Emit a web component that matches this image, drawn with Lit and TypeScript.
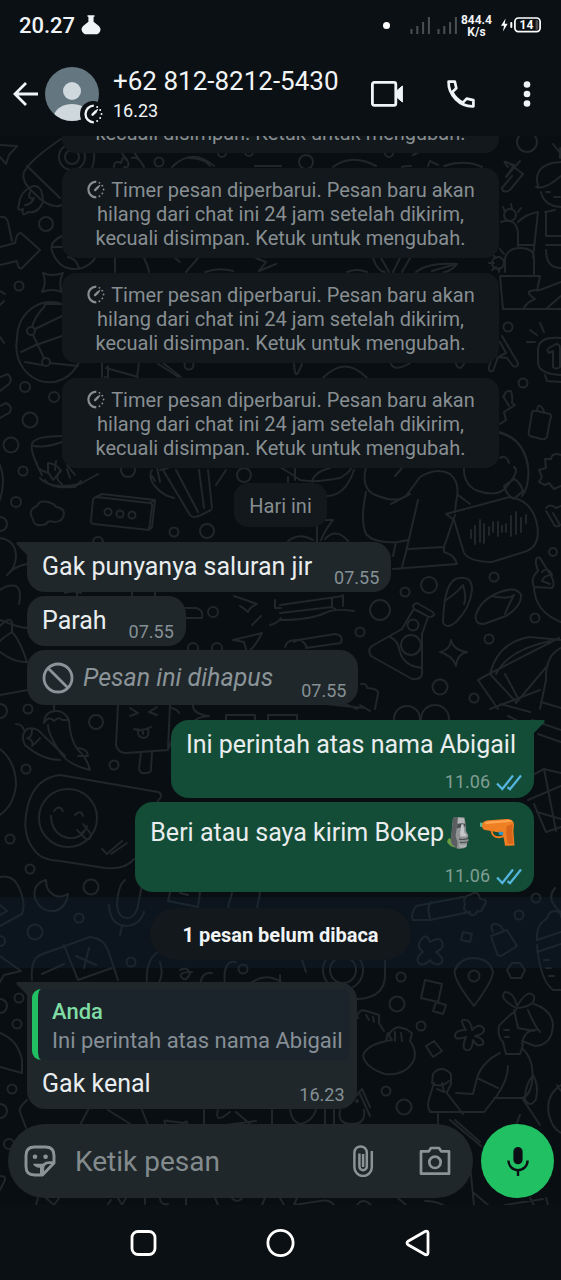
import { LitElement, html, css, svg, nothing } from "lit";
import { customElement, property } from "lit/decorators.js";

type Bubble = {
  side: "in" | "out";
  tail?: boolean;
  text: string;
  time: string;
  deleted?: boolean;
  emojis?: boolean;
  quote?: { author: string; text: string };
};

const TIMER_NOTE =
  "Timer pesan diperbarui. Pesan baru akan hilang dari chat ini 24 jam setelah dikirim, kecuali disimpan. Ketuk untuk mengubah.";
const TIMER_NOTE_END = "kecuali disimpan. Ketuk untuk mengubah.";

const BUBBLES_BEFORE: Bubble[][] = [
  [
    { side: "in", tail: true, text: "Gak punyanya saluran jir", time: "07.55" },
    { side: "in", text: "Parah", time: "07.55" },
    { side: "in", text: "Pesan ini dihapus", time: "07.55", deleted: true },
  ],
  [
    { side: "out", tail: true, text: "Ini perintah atas nama Abigail", time: "11.06" },
    { side: "out", text: "Beri atau saya kirim Bokep", time: "11.06", emojis: true },
  ],
];

const LAST: Bubble = {
  side: "in",
  tail: true,
  text: "Gak kenal",
  time: "16.23",
  quote: { author: "Anda", text: "Ini perintah atas nama Abigail" },
};

/* ---------- icons ---------- */

const timerIcon = html`<svg viewBox="0 0 24 24" fill="none" stroke="currentColor" stroke-linecap="round">
  <path d="M13 2A10 10 0 1 0 13 22" stroke-width="2.8" stroke-linecap="butt" />
  <path d="M11.500 12.700 15.300 9" stroke-width="3" /><path d="M14 10.300 17.300 6.900" stroke-width="1.600" />
  <path d="M17 3.600v.01M20.600 7.100v.01M22.200 12v.01M20.600 16.900v.01M17 20.500v.01" stroke-width="2.400" />
</svg>`;

const backIcon = html`<svg width="28" height="28" viewBox="0 0 28 28" fill="none" stroke="currentColor" stroke-width="2.8">
  <path d="M26 14H3.5M14 3 3 14l11 11" />
</svg>`;

const videoIcon = html`<svg width="34" height="28" viewBox="0 0 34 28">
  <rect x="2.4" y="2.4" width="23.4" height="23" rx="1.8" fill="none" stroke="currentColor" stroke-width="2.8" />
  <path d="M26 11.400 32.400 6v16L26 16.600z" fill="currentColor" stroke="currentColor" stroke-width="1" />
</svg>`;

const callIcon = html`<svg width="30" height="30" viewBox="0 0 30 30" fill="none" stroke="currentColor" stroke-width="2.7" stroke-linejoin="round">
  <path d="M2.600 2.600h6.200l1.500 6.700-4 3.800C8.600 17.800 12 21.200 16.800 23.600l3.900-4 6.700 1.500v6.200C14 27.900 2.100 16 2.600 2.600z" />
</svg>`;

const moreIcon = html`<svg width="8" height="28" viewBox="0 0 8 28" fill="currentColor">
  <circle cx="4" cy="4.500" r="3.300" /><circle cx="4" cy="14" r="3.300" /><circle cx="4" cy="23.500" r="3.300" />
</svg>`;

const flaskIcon = html`<svg width="20" height="20" viewBox="0 0 20 20" fill="currentColor">
  <path d="M6.500.3h7v1.400h-.9v5.100c1.600 1.500 5.300 3.500 6.600 6.200.9 2.100-.4 5-3.200 6.300H4C1.200 18 0 15.100.8 13c1.300-2.700 5-4.700 6.600-6.200V1.700h-.9z" />
</svg>`;

const signalIcon = html`<svg width="21" height="17" viewBox="0 0 21 17" fill="currentColor">
  <rect x="0.500" y="12" width="2" height="5" /><rect x="6.300" y="9" width="2" height="8" />
  <rect x="12.100" y="5" width="2" height="12" /><rect x="17.900" y="0" width="2" height="17" />
</svg>`;

const batteryIcon = html`<svg width="42" height="16" viewBox="0 0 42 16">
  <path d="M5.600 1.500 1 8.800h3L3 14.500l4.700-7.800H4.700z" fill="#fff" />
  <rect x="10.300" y="5" width="2" height="6" rx="1" fill="#fff" />
  <rect x="14.900" y="1" width="25.200" height="13.600" rx="3.500" fill="none" stroke="#fff" stroke-width="1.700" />
  <rect x="35.600" y="3" width="2.600" height="9.700" rx="1" fill="#4a4e51" />
  <text x="26.500" y="12.200" text-anchor="middle" font-family="Roboto, sans-serif" font-weight="700" font-size="12" fill="#fff">14</text>
</svg>`;

const avatarArt = html`<svg width="54" height="54" viewBox="0 0 54 54">
  <clipPath id="disc"><circle cx="27" cy="27" r="27" /></clipPath>
  <g clip-path="url(#disc)">
    <rect width="54" height="54" fill="#64767f" />
    <circle cx="27" cy="24" r="9" fill="#cfd8dd" />
    <path d="M9 54v-6c2.500-7.500 10-11 18-11s15.500 3.500 18 11v6z" fill="#cfd8dd" />
  </g>
</svg>`;

const blockedIcon = html`<svg width="32" height="32" viewBox="0 0 32 32" fill="none" stroke="currentColor" stroke-width="2.800">
  <circle cx="16" cy="16" r="14" /><path d="M6.200 6.200 25.800 25.800" />
</svg>`;

const ticksIcon = html`<svg width="26" height="17" viewBox="0 0 26 17" fill="none" stroke="#53b4dd" stroke-width="2.300">
  <path d="M1 9.500 6.300 15 17 1.500M11.500 13.200 14 15.200 25 1.500" />
</svg>`;

const stickerIcon = html`<svg width="32" height="32" viewBox="0 0 32 32" fill="none" stroke="currentColor">
  <path d="M10.500 2h11Q30 2 30 10.500V18L18.500 30h-8Q2 30 2 21.500v-11Q2 2 10.500 2z" stroke-width="2.900" stroke-linejoin="round" />
  <path d="M29.500 17.600h-4.300q-6.400 0-6.400 6.400v5.500" stroke-width="2.600" />
  <path d="M9 18.800h11.500l-2 3.300q-1.500 1-3 .7-5-.3-6.500-4z" fill="currentColor" stroke="none" />
  <path d="M17.300 20v9" stroke-width="2.600" />
  <circle cx="11" cy="11.700" r="2.300" fill="currentColor" stroke="none" />
  <circle cx="21.600" cy="11.700" r="2.300" fill="currentColor" stroke="none" />
</svg>`;

const clipIcon = html`<svg width="22" height="32" viewBox="0 0 22 32" fill="none" stroke="currentColor" stroke-width="2.500">
  <path d="M19.800 6v16.300a8.700 8.700 0 0 1-17.400 0V7.600a6.200 6.200 0 0 1 12.400 0v14a3.700 3.700 0 0 1-7.400 0V8.500M11.100 9v13" />
</svg>`;

const cameraIcon = html`<svg width="32" height="30" viewBox="0 0 32 30" fill="none" stroke="currentColor" stroke-width="2.700" stroke-linejoin="round">
  <path d="M2 5.300h7.800L12 2h8l2.200 3.300H30v22.400H2z" /><circle cx="16" cy="16.300" r="5.700" />
</svg>`;

const micIcon = html`<svg width="24" height="30" viewBox="0 0 24 30" fill="none" stroke="#0b1014" stroke-width="2.400">
  <rect x="8.300" y="1.800" width="7.400" height="15.600" rx="3.700" fill="#0b1014" stroke-width="1.800" />
  <path d="M2.400 14.500a9.600 9.600 0 0 0 19.200 0M12 24v6" />
</svg>`;

const moaiArt = html`<svg class="moai" width="24" height="34" viewBox="0 0 24 34" role="img" aria-label="moai">
  <path d="M0 26q.5-3 2.500-4l4 3 2 6.500Q3 31 0 26z" fill="#6c9a45" />
  <path d="M6 2Q10 .2 17.500 1.500l1.200 7 .3 6.500 2.500 4.500-1 2.500 1.300 2-1.500 2.500-.8 4.500q-4 2.500-9.500 1.500L4.500 28Q3.500 24 4.500 18z" fill="#909294" />
  <path d="M6 2Q9 .6 11 1.200L9.800 12 8.500 20l2 6-.5 6.500L4.500 28Q3.500 24 4.500 18z" fill="#5c5f62" />
  <path d="M11 2.200q3.500-.6 6 .1l.6 4.700h-7z" fill="#b3b5b6" />
  <path d="M10.300 8.200q4.500-1.400 8.300-.2v2l-2 1-6.600 1.300z" fill="#4a4d50" />
  <path d="M14.200 8.500l2.300-.3.900 8.300 2.300 2.600-.8 1.500-5.200-.2-.7-2.200z" fill="#c4c6c7" />
  <path d="M12 23.200q4.500.8 9-.5M13 26.300q4.500.6 8-.6" stroke="#4a4d50" stroke-width="1.200" fill="none" />
  <path d="M12 28.500q4.500.8 7.700-.2l-.5 2.500q-3.200 1.500-6.500.8z" fill="#adafb1" />
</svg>`;

const pistolArt = html`<svg class="pistol" width="36" height="30" viewBox="0 0 36 30" role="img" aria-label="pistol">
  <path d="M2 5.500Q4 2.500 9 2.300L27 1q6-.2 7 5l-.6 7 1.100 14.500-9.500.3-1.500-9-3-4L4 11.800Q.8 9 2 5.500z" fill="#ee7f22" />
  <path d="M4 4.700Q6 3.300 10 3.200L28 2q3-.2 4.500 1.700L6 6z" fill="#ffa551" />
  <path d="M26.500 8.500 32.500 6l-.3 7 1 12.500-5.500.2-1.400-9.700z" fill="#d8661a" />
  <path d="M11.500 12.500q.8 7 7.500 6.800l5-1" fill="none" stroke="#ee7a1c" stroke-width="1.900" />
  <path d="M18.500 13.500l5 .7-.8 3-3.600-.5z" fill="#2a93c9" />
  <rect x="0" y="4.500" width="2.300" height="4.500" rx="1" fill="#58b79c" />
</svg>`;

/* ---------- doodle wallpaper ---------- */

const DOTS: [number, number, number][] = [
  [72, 157, 13], [72, 157, 7], [159, 162, 4.500], [46, 224, 7], [19, 286, 4.500], [25, 387, 5], [54, 397, 5],
  [30, 420, 7.500], [11, 445, 7.500], [23, 471, 4.500], [128, 470, 7], [244, 475, 7], [189, 365, 4.500],
  [31, 331, 4], [46, 362, 4], [222, 153, 4], [249, 152, 4], [306, 162, 7], [389, 153, 4], [527, 142, 10],
  [508, 327, 4.500], [523, 383, 4.500], [16, 502, 5], [0, 524, 7], [108, 512, 3.500], [120, 514, 3.500],
  [132, 515, 3.500], [174, 532, 4.500], [207, 531, 7], [98, 542, 5], [213, 612, 5], [193, 648, 5], [217, 648, 5],
  [429, 585, 8], [405, 592, 4.500], [380, 610, 10], [494, 577, 4.500], [535, 618, 4.500], [360, 632, 4.500],
  [489, 639, 4.500], [440, 687, 7.500], [474, 698, 4.500], [413, 625, 5.500], [411, 645, 10], [407, 719, 13],
  [435, 719, 14], [0, 711, 7], [28, 709, 4.500], [96, 722, 7], [26, 769, 4.500], [114, 765, 4.500],
  [10, 839, 4.500], [30, 869, 4.500], [91, 887, 7.500], [79, 918, 4.500], [35, 932, 7.500], [131, 962, 4.500],
  [0, 941, 5], [243, 969, 4.500], [68, 818, 29], [536, 898, 4.500], [519, 915, 4.500], [401, 977, 4.500],
  [397, 1004, 7.500], [474, 976, 5.500], [421, 1026, 4.500], [386, 1091, 4.500], [404, 1107, 7.500],
  [343, 970, 20], [343, 970, 13], [0, 1006, 7], [19, 998, 4.500], [17, 1024, 4.500], [12, 1089, 4.500],
  [0, 1111, 7], [9, 1144, 5], [510, 215, 6], [498, 263, 6], [553, 552, 4], [357, 1101, 1],
];

const LINES: string[] = [
  // star, rocket and flame
  "M0 145 17 146 9 155 6 164 0 157", "M61 139Q30 160 24 172 21 182 34 193 50 210 62 205M27 166 60 198",
  "M41 190Q36 183 29 188 20 193 19 204 16 212 23 209 21 218 28 212 38 214 43 202 43 196 41 190M30 192Q27 200 34 198 31 205 25 205",
  "M94 152Q95 160 92 168M114 167Q114 160 121 163 124 152 128 162 130 168 124 167M132 158Q138 155 144 167M122 153 126 160M134 152l4 6",
  "M172 167Q192 147 214 166M188 158Q205 158 210 166M333 167Q352 153 376 166M402 167Q403 166 411 166M428 166l2-5 8 4M444 166Q465 159 482 167M413 155l10-5M255 166h26",
  // arrow, basketball, sparkle
  "M0 217Q6 216 8 222L12 241M0 247 15 243Q17 232 21 233L40 250 22 268Q18 270 17 261L0 265",
  "M62 236Q49 242 52 251 60 273 82 268 92 264 95 258M52 247 62 247M68 257Q76 258 79 268",
  "M43 273Q52 277 63 273 58 283 62 292 52 288 42 292 47 283 43 273",
  "M0 291l5 3M0 305l4-4M0 337l4 6M17 339a33 36 0 0 0 62 23M62 304A34 36 0 0 0 17 339M62 304h-18M45 306Q35 316 32 327M35 329 62 316M21 352 36 345 62 336M33 335 44 358M50 363 78 366M42 365 25 362",
  "M115 258v14M144 258q4 8 5 14M186 272l12-14M256 258l10 4-7 9 17-7M205 272q14-5 28-1M175 258l5 4",
  // pencils, cup
  "M0 377 8 374Q13 380 9 384L0 391M0 406 6 403Q14 407 9 413L0 418",
  "M62 436Q32 436 32 445 30 452 42 475M34 446Q46 448 62 442M37 463Q36 469 48 473M48 463q9 1 13 8l-8 9-5-8zM102 363v14M106 368l32 9M108 366v12l-3-1M139 363l-2 14M158 364Q170 371 178 377M163 363l18 14",
  "M0 465Q6 480 0 500M56 461 55 470M40 478Q50 490 80 484L98 474M61 470q-8 8 1 14M70 478l-3-9M75 475l-8-10M45 480q5 9 30 7l6-6",
  // cloud
  "M33 519Q27 510 37 506 39 500 48 502 55 504 56 507 64 508 64 514 63 522 54 522 48 520 46 524 34 528 33 519",
  // box
  "M96 497 150 503Q153 504 152 507L149 530 94 524Q90 523 91 520L93 500Q94 497 96 497M96 497 102 494 155 500 152 527 149 530M150 503l5-3",
  // bundle of pencils
  "M152 470Q148 476 154 485 163 496 174 498M152 476l3 5M157 468 160 482M163 470 190 515Q193 519 201 515L211 510M176 470 198 512M199 470 204 508M208 470 212 508M216 485 226 470M160 470l8-2",
  // kettle, sofa, people
  "M0 538Q15 540 16 555 16 568 7 575M7 575Q15 566 27 564M0 590Q8 584 16 586 22 590 19 604M0 626Q10 616 12 622L12 632Q20 640 27 662M0 620Q20 628 27 628M12 632q-8 5-12 9M0 652Q15 663 28 662M0 695 28 690",
  "M77 592v4M132 592v5M155 592v4M65 593q8-3 16 0M184 608h12Q204 610 202 618H184",
  "M234 596 257 604Q250 607 248 612 244 608 240 606M252 625l9-9M233 640 262 633Q256 646 247 653L244 642zM275 600v8h6M270 625q8-2 11-7",
  "M280 605 343 596M280 613 332 607V598M343 595v11M280 620Q310 620 325 613 334 608 354 611M332 607l3 2M285 647Q287 639 298 640L335 634Q344 635 341 643L306 648M294 642q8-6 13 6",
  "M280 467Q295 476 300 480 315 483 340 478 354 470 352 463M288 477v5M295 466v14M312 482Q314 472 330 468M325 496Q345 497 354 470M317 520v22M321 540Q325 530 333 520H322M325 539Q336 527 348 541M288 541q12-9 25-1",
  // seated figure
  "M366 467Q361 487 373 494 395 504 406 496L420 477Q437 467 450 474 461 483 456 502L455 512M391 504 410 494M418 500 406 552 402 567M366 492Q360 520 366 534 375 544 398 542L408 540M408 549 444 547V552Q455 555 457 564L393 569M396 542 393 556M444 547 455 515M458 495l12 9M395 476l7-8",
  "M495 432Q522 436 528 465 530 485 522 496M464 467Q463 485 478 491 500 498 508 485 520 470 514 467M504 486l10-7q6 3 9 12l-9 8q-7-3-10-13M500 458q6-4 9 5",
  // voice note
  "M446 514 510 497Q530 500 536 520 543 546 524 552L492 562Q470 562 464 553L454 520z",
  "M471 530v8M475 526v18M480 520v22M484 524v19M489 527v8M493 522v10M498 522v14M502 526v6M506 524v8M511 516v20M516 512v22M521 518v14M526 515v8",
  // cactus lady and pot
  "M538 186Q533 168 552 163L561 162M536 187Q545 190 561 176M541 192Q544 206 561 207M546 192h4M554 197h6M553 144l8 10M560 148v10",
  "M506 162l8 3-8 12 14-16M508 167Q500 158 510 164L523 174 510 190Q503 194 502 188L512 176M501 222Q517 217 518 234V246M505 272V258Q508 248 520 248 534 248 534 258V274M500 276h40l-3 15M500 276l3 33H561M546 213V236H561M538 212Q526 214 518 222M538 212l-5 45M518 245l16 0M546 245H561M546 250Q546 268 561 268M545 212l10-2M561 282 540 290Q525 290 530 295L535 299Q527 302 524 308M561 296 547 308",
  "M500 249l4 5M489 263h5M492 254l4 4M492 270l4-3M499 272v-4M505 212l-2-5M512 209l-1-5M518 212l3-4",
  // flowers and badge
  "M373 258q5 14 12 14M381 258l8 14M400 258l-7 14M410 258l-8 14M416 272Q428 262 457 264 450 272 444 272M347 272q10-4 20 0M432 271l24-7",
  "M502 336 518 363Q518 368 513 366L507 358 498 357 493 371Q488 372 489 367L492 357M500 342l6 11-6 3M527 342h8M530 330l7 5M540 323l4 9M561 338Q538 336 538 350V362Q538 374 561 375M545 375l2 6 14 1M549 348l7-4q4 0 4 4v19q-4 3-7 0v-16l-4 2q-3-3 0-5",
  "M391 364Q395 372 410 363M456 364q3 8 8 0M323 378Q345 355 367 378M294 364q1 14 4 9l4-9",
  "M504 398Q504 390 511 391 513 397 512 403L515 405 504 412 506 420 500 424M503 396l6 10M532 412Q533 410 537 411L550 414Q552 416 550 420L547 437Q545 440 541 439L530 436Q528 435 529 431zM537 411Q538 400 544 411",
  "M500 432Q525 440 528 468M561 455q-9-3-10 4l-6 0 1 9-7 2 3 7-3 5 6 3 4-2 5 6 7-3M546 508q4-5 10 0l5-2M546 511l9 15q4 1 5-1l-7-12",
  // flip-flops, flask
  "M460 578Q472 576 472 590 470 608 456 622 446 630 443 622 444 590 452 582 455 578 460 578M446 600Q458 592 463 585 467 598 464 604",
  "M476 615Q480 600 500 592 516 586 521 595 522 606 506 616L484 624Q474 624 476 615M492 596Q508 600 514 595 508 606 505 614",
  "M417 603l14 8q5 3 2 5-4 2-6 0l-13-7q-3-4 3-6M413 610 402 629 372 646Q367 650 371 656L412 679Q421 680 422 674L422 634 428 617M390 637Q398 640 400 652 404 666 422 668",
  "M451 640q2 10 16 12-10 2-11 14-3-10-16-14 10-2 11-12",
  "M540 558q-5-2-4 6l2 7Q530 578 534 587M540 558 550 574Q556 584 552 588L534 587M534 587Q535 612 561 622M542 572q6-6 10 3-8 0-10 6l8 3",
  // hat and sneaker
  "M478 680l11-6 70-36M478 680 498 709M490 674 516 702M505 674 519 700M490 674Q498 642 530 637L561 640M496 674Q508 650 550 641M548 665 516 703M561 648Q545 656 546 680L540 709M540 690l-50 19M561 708l-20-6",
  "M361 684q6-1 6 4l7 1q5 2 4 5l-3 15M345 704l12 5M360 705l10 6M325 704l40 4",
  // chillies
  "M16 724q6 0 8 6M25 745Q20 735 27 729 36 726 43 735M25 745Q42 760 60 760M32 730q0 8-5 8 7 2 5 8 5-4 8-8M43 735 65 756M44 723Q45 710 58 711 65 712 69 720 70 740 78 750 87 758 90 770 70 765 62 755 48 735 48 725M44 723q5-8 10-2 5-5 8-1l7 0M78 748q10 1 10 8l-10 0M54 705v6",
  // popsicle
  "M118 705 116 745Q118 753 126 753L168 750 172 740M170 705 168 748M141 753l-2 16q1 5 7 4 6 0 5-5l1-15M130 708l8 5-8 3M157 707l-8 5 8 3M134 729q9 3 17-2M138 729q-1 9 6 9 6-1 4-10M143 731v3",
  "M193 704q-1 10 16 12-14 1-17 8M226 720v-5h29v5M268 720v-5h29v5M172 708q6 2 7 5",
  // speech bubble with smiley
  "M60 775 158 792Q162 794 161 797L154 806M60 775Q35 778 28 805 20 835 36 852 42 860 60 861L105 868Q125 870 134 859",
  "M51 816Q51 830 62 836 75 842 84 832L87 826M54 811q5-7 9 0M75 815q6-6 8 1M77 830l10 10q4-1 4-6l-8-10M81 834l4-4M102 849 107 854 122 841M111 854 127 843",
  "M0 749Q16 762 16 785 14 805 0 815M0 877Q14 874 20 890 26 905 22 914L0 926M0 905l7 6-7 4",
  "M46 880Q32 884 35 898 40 912 55 911 66 908 68 894 58 900 50 892 46 888 46 880",
  // mic, pill, seaweed
  "M125 880Q118 885 117 905 118 918 128 918 137 917 139 900L143 880M109 905Q110 925 126 926 140 925 144 912M122 926l-2 9M170 893l-2 8 30 6 2-15M180 893l8 2M232 893l-4 14M260 893l-4 20",
  "M0 956 21 971 4 975 0 982M32 980Q30 960 40 955L90 937Q103 938 108 950L118 980M64 945 78 980M42 974 64 964M76 956 96 965M89 948 84 968M78 980l34-12M147 985Q145 960 158 952M160 962Q164 975 158 984M180 970q8-4 10 4-4 8-8 4-5-6 10-6M200 985q2-14 12-12M225 985Q222 960 236 962M248 985Q266 970 284 984",
  // racket, gift, bottle
  "M501 704 530 712M508 716 520 722M532 720l29 10M538 734l23 8M514 785l30-16 17 4M534 804l12 28 15-5M544 769l12 62M528 800 561 786M537 812l24 7",
  "M416 906Q410 915 413 920L430 920 470 912M416 906 463 897M430 918Q426 905 432 902M470 895q8-6 10 4 10 0 3 8-1 6-6 4-3 8-9 1-6-1-3-8-3-8 5-9",
  "M545 920l3-3q0-6 8-6 6 2 5 6M545 920Q536 925 537 940L561 932M537 952 561 944M537 945Q540 980 553 990L561 990M544 960l5 0M546 968l5 0M549 976l5 0M555 888Q545 900 561 912",
  "M421 940q5-8 9 2 10-6 12 0 3 6-6 10 8 6 6 10-6 6-12-2-8 8-12 2-2-6 5-10-7-5-2-12M463 932l9 2-2 8-9-2zM491 936l16-6 10 16-16 10q-3 0-4-2zM493 932q-4-8 2-8 6 0 8 6M507 970l5-7h8l5 7-4 8h-10z",
  // location pin, squares, asterisk
  "M474 1006Q452 978 455 970 460 958 474 958 490 959 493 972 492 982 474 1006M425 980 442 984 438 1002 421 998zM436 1002l10 3-3 9-10-3zM426 1046l8-5 8 10-9 6z",
  "M466 1030q-8-12 0-10 5 1 6 10 8-8 12-1 1 5-9 7 10 3 8 8-6 4-10-4-1 12-7 10-5-2 0-13-12 4-11-2 1-5 11-5",
  // dumplings
  "M302 960l4 12M280 975v14M385 950V975Q385 998 357 999M358 1018q-3-3 4-8l8 2 9 3 0 8 5 8M366 1015l3 5M373 1017l1 5M392 1040q-6-6 2-11l4-2 8 2 6 4-2 8Q418 1052 413 1062 404 1076 385 1074 366 1068 363 1056 366 1044 392 1040M388 1033l-2 8M395 1032v9M401 1033l1 8",
  // running girl
  "M516 1008Q498 998 505 992 514 992 517 1006 528 988 534 996 536 1006 518 1008M534 1004Q552 1010 553 1025 552 1045 535 1046L522 1041M516 1010Q502 1022 499 1026 497 1036 503 1042L506 1054H520L523 1045M514 1010l4 18 16 3M528 1010q6 15 12 22M504 1030h5M505 1037h4M536 1030q-12 0-14 14",
  "M500 1053Q482 1062 477 1078L498 1088M508 1066Q508 1080 496 1097L484 1112 430 1112M522 1048Q535 1060 532 1082 530 1096 522 1098L494 1098M477 1078 473 1094 456 1093M522 1098 540 1125M533 1075q6 10 3 24-6 10-11 0 0-14 8-24",
  "M432 1083l1-9q8-10 18 0v10l-4 8M432 1083q8 6 17-2M434 1083l-5 16Q426 1110 432 1112M446 1092 463 1114M437 1089l7 3-2-9M450 1120 481 1146M438 1124v-10M520 1115l-4 10M561 1085Q545 1095 549 1115 552 1128 561 1133M557 1085l4 6",
  // lower strip
  "M0 1033Q18 1040 22 1060L22 1073 0 1067M27 1100Q18 1108 20 1112L26 1128M88 1110 80 1125M108 1110l24 15M142 1110l6 15M166 1125q-4-6 2-4l16 2q4-4 3 3M204 1110v15M218 1110Q214 1125 230 1112M226 1125q16-2 30-4M236 1112l14 12M272 1110v15",
  "M340 1110q-3 14 12 14 14 0 12-14M290 1110q2 12 10 14 12-2 16-14M325 1110v14M334 1110v14M360 1094l10 22M356 1096l6-7 8 18",
  "M0 1176q6 0 5 4l-5 10M38 1198l-2 7M46 1198l8 7 5-7M108 1204l3-4M118 1198l4 7 4-7M145 1198v6M160 1198q0 7 8 6M186 1205v-7M215 1198l3 7M232 1198q5 6 10 0M262 1205l3-7M284 1205l-4-7M297 1198l-3 7 26-4q10-2 14 4M357 1205q6-8 14 0M398 1198l8 7M425 1201q10 0 18 4M470 1165q2 20 4 40M474 1193l14 12M505 1205l38-6M530 1198l4 7M546 1198l2 7M455 1120 480 1142",
];

@customElement("chat-wallpaper")
export class ChatWallpaper extends LitElement {
  static styles = css`
    :host { display: block; }
    .art { display: block; width: 100%; height: 100%; }
  `;
  render() {
    return html`<svg class="art" viewBox="0 136 561 1069" preserveAspectRatio="xMidYMin slice" aria-hidden="true"
      fill="none" stroke="#20262a" stroke-width="2" stroke-linecap="round" stroke-linejoin="round">
      ${DOTS.map(([x, y, r]) => svg`<circle cx=${x} cy=${y} r=${r}></circle>`)}
      ${LINES.map((d) => svg`<path d=${d}></path>`)}
    </svg>`;
  }
}

@customElement("chat-bubble")
export class ChatBubble extends LitElement {
  @property({ attribute: false }) data!: Bubble;

  static styles = css`
    :host { display: flex; }
    svg { flex: none; }
    .bubble {
      position: relative;
      box-sizing: border-box;
      border-radius: 18px;
      background: #1f272a;
      color: #e9edef;
      font-size: 25px;
      line-height: 30px;
      padding: 10px 12px 3px 15px;
      max-width: 80%;
    }
    .out { margin-left: auto; background: #144d37; padding-bottom: 5px; }
    .tail-in { border-top-left-radius: 0; }
    .tail-out { border-top-right-radius: 0; }
    .tail { position: absolute; top: 0; width: 14px; height: 16px; }
    .tail-in .tail { left: -11px; fill: #1f272a; }
    .tail-out .tail { right: -11px; fill: #144d37; }
    .row { display: flex; align-items: flex-end; justify-content: space-between; gap: 22px; }
    .row .text { margin-bottom: 7px; }
    .stack { display: flex; flex-direction: column; gap: 11px; }
    .stack .text { padding-right: 6px; }
    .stack .meta { align-self: flex-end; }
    .text { display: flex; align-items: center; }
    .rich { min-height: 42px; }
    .deleted { gap: 9px; min-height: 35px; font-style: italic; color: #8b9498; margin-right: 6px; }
    .moai { margin-left: 3px; }
    .pistol { margin-left: 9px; }
    .meta { display: flex; align-items: center; gap: 6px; font-size: 18px; line-height: 22px; color: #859095; }
    .out .meta { color: #7f9d92; }
    .quoted { padding: 7px 7px 3px 5px; }
    .quoted .row { padding: 9px 5px 0 10px; }
    .quote {
      overflow: hidden;
      border-radius: 9px;
      border-left: 6px solid #21c063;
      background: #1c242b;
      padding: 8px 7px 5px 14px;
      font-size: 22px;
      line-height: 29px;
    }
    .author { font-weight: 500; color: #7fdca4; }
    .cited { color: #868f96; }
  `;

  render() {
    const b = this.data;
    const text = html`<div class="text ${b.emojis ? "rich" : ""} ${b.deleted ? "deleted" : ""}">
      ${b.deleted ? blockedIcon : nothing}<span>${b.text}</span>${b.emojis ? html`${moaiArt}${pistolArt}` : nothing}
    </div>`;
    const tail =
      b.side === "in"
        ? html`<svg class="tail" viewBox="0 0 14 16"><path d="M2 0H14V16H11V13L.8 2.500Q-.5 0 2 0z" /></svg>`
        : html`<svg class="tail" viewBox="0 0 14 16"><path d="M12 0H0V16H3V13L13.200 2.500Q14.500 0 12 0z" /></svg>`;
    return html`<div class="bubble ${b.side} ${b.tail ? "tail-" + b.side : ""} ${b.quote ? "quoted" : ""}">
      ${b.tail ? tail : nothing}
      ${b.quote
        ? html`<div class="quote"><div class="author">${b.quote.author}</div><div class="cited">${b.quote.text}</div></div>`
        : nothing}
      <div class=${b.side === "out" ? "stack" : "row"}>
        ${text}
        <div class="meta"><span>${b.time}</span>${b.side === "out" ? ticksIcon : nothing}</div>
      </div>
    </div>`;
  }
}

@customElement("app-root")
export class AppRoot extends LitElement {
  static styles = css`
    :host {
      display: flex;
      flex-direction: column;
      height: 100vh;
      overflow: hidden;
      background: #0b1014;
      color: #f1f4f6;
      font-family: Roboto, "Noto Sans", sans-serif;
    }
    svg { display: block; flex: none; }
    button { display: flex; padding: 0; border: 0; background: none; color: inherit; font: inherit; cursor: pointer; }

    .status { display: flex; align-items: center; height: 50px; padding: 0 19px; }
    .clock { font-size: 22px; line-height: 28px; font-weight: 500; margin-right: 6px; padding-top: 1px; }
    .status-right { display: flex; align-items: center; margin-left: auto; }
    .dot { width: 7px; height: 7px; border-radius: 50%; background: #fff; margin-right: 20px; }
    .signals { display: flex; gap: 6px; color: #4a4f52; margin-right: 3px; }
    .speed { font-size: 12px; line-height: 12px; font-weight: 700; text-align: center; margin-right: 8px; padding-top: 2px; }

    .header { display: flex; align-items: center; box-sizing: border-box; height: 86px; padding: 2px 30px 0 12px; }
    .avatar { position: relative; margin-left: 5px; }
    .badge {
      position: absolute; right: -7px; bottom: -6px; display: flex; width: 20px; height: 20px;
      border: 3px solid #0b1014; border-radius: 50%; background: #0b1014;
    }
    .badge svg, .timer svg { width: 100%; height: 100%; }
    .who { flex: 1; min-width: 0; margin-left: 14px; padding-bottom: 1px; }
    .name { font-size: 26px; line-height: 34px; font-weight: 400; margin: 0; white-space: nowrap; }
    .seen { font-size: 18px; line-height: 26px; }
    .actions { display: flex; align-items: center; gap: 42px; }
    .actions .more { margin-left: 5px; }

    .chat { position: relative; display: flex; flex-direction: column; flex: 1; min-height: 0; background: #090e12; overflow: hidden; }
    .wallpaper { position: absolute; inset: 0; }
    .log {
      position: relative; display: flex; flex-direction: column; justify-content: flex-end; gap: 15px;
      flex: 1; min-height: 0; overflow: hidden;
    }
    .notice {
      align-self: center; flex: none; box-sizing: border-box; width: 78%; padding: 10px 22px 8px; border-radius: 14px;
      background: #12181b; color: #878e92; font-size: 20px; line-height: 24px; text-align: center;
    }
    .timer { display: inline-block; width: 19px; height: 19px; margin-right: 6px; vertical-align: -2px; }
    .date {
      align-self: center; flex: none; padding: 11px 15px 9px; border-radius: 14px;
      background: #12181b; color: #878e92; font-size: 20px; line-height: 24px;
    }
    .group { display: flex; flex: none; flex-direction: column; gap: 4px; padding: 0 27px; }
    .unread { display: flex; flex: none; justify-content: center; padding: 11px 0 8px; margin: -10px 0 -1px; background: rgba(20, 36, 56, 0.32); }
    .pill { padding: 15px 32px 13px; border-radius: 26px; background: #12181b; font-size: 20px; line-height: 24px; font-weight: 700; }

    .composer { position: relative; display: flex; gap: 8px; padding: 15px 7px 7px 8px; }
    .field { display: flex; align-items: center; flex: 1; min-width: 0; height: 74px; box-sizing: border-box; padding: 0 22px 0 16px; border-radius: 37px; background: #1f272a; color: #8b9396; }
    .input { flex: 1; min-width: 0; margin: 0 0 0 19px; padding: 1px 0 0; border: 0; outline: 0; background: none; color: #e9edef; font: inherit; font-size: 28px; line-height: 36px; }
    .input::placeholder { color: #838b8e; opacity: 1; }
    .camera { margin-left: 45px; }
    .mic { align-items: center; justify-content: center; width: 73px; height: 74px; border-radius: 50%; background: #21c063; }

    .nav { display: flex; align-items: center; justify-content: center; gap: 109px; height: 75px; color: #fff; }
  `;

  private notice() {
    return html`<div class="notice"><span class="timer">${timerIcon}</span>${TIMER_NOTE}</div>`;
  }

  private group(items: Bubble[]) {
    return html`<div class="group">${items.map((b) => html`<chat-bubble .data=${b}></chat-bubble>`)}</div>`;
  }

  render() {
    return html`
      <div class="status">
        <span class="clock">20.27</span>${flaskIcon}
        <div class="status-right">
          <span class="dot"></span>
          <span class="signals">${signalIcon}${signalIcon}</span>
          <span class="speed">844.4<br />K/s</span>
          ${batteryIcon}
        </div>
      </div>
      <header class="header">
        <button aria-label="Kembali">${backIcon}</button>
        <div class="avatar">${avatarArt}<span class="badge">${timerIcon}</span></div>
        <div class="who">
          <h1 class="name">+62 812-8212-5430</h1>
          <div class="seen">16.23</div>
        </div>
        <div class="actions">
          <button aria-label="Panggilan video">${videoIcon}</button>
          <button aria-label="Panggilan suara">${callIcon}</button>
          <button class="more" aria-label="Opsi lainnya">${moreIcon}</button>
        </div>
      </header>
      <main class="chat">
        <chat-wallpaper class="wallpaper"></chat-wallpaper>
        <div class="log">
          <div class="notice">${TIMER_NOTE_END}</div>
          ${[0, 1, 2].map(() => this.notice())}
          <div class="date">Hari ini</div>
          ${BUBBLES_BEFORE.map((g) => this.group(g))}
          <div class="unread"><span class="pill">1 pesan belum dibaca</span></div>
          ${this.group([LAST])}
        </div>
        <div class="composer">
          <div class="field">
            <button aria-label="Stiker">${stickerIcon}</button>
            <input class="input" type="text" placeholder="Ketik pesan" aria-label="Ketik pesan" />
            <button aria-label="Lampirkan">${clipIcon}</button>
            <button class="camera" aria-label="Kamera">${cameraIcon}</button>
          </div>
          <button class="mic" aria-label="Rekam pesan suara">${micIcon}</button>
        </div>
      </main>
      <nav class="nav">
        <button aria-label="Aplikasi terbaru">
          <svg width="27" height="28" viewBox="0 0 27 28" fill="none" stroke="currentColor" stroke-width="2.800"><rect x="2" y="2.500" width="23" height="23" rx="6" /></svg>
        </button>
        <button aria-label="Beranda">
          <svg width="29" height="28" viewBox="0 0 29 28" fill="none" stroke="currentColor" stroke-width="2.800"><circle cx="14.500" cy="14" r="12.600" /></svg>
        </button>
        <button aria-label="Kembali ke layar sebelumnya">
          <svg width="27" height="28" viewBox="0 0 27 28" fill="none" stroke="currentColor" stroke-width="2.800" stroke-linejoin="round"><path d="M21.500 2.300 4 12.300q-2 1.600 0 3.400L21.500 25.700q2.300.6 2.500-1.700V4q-.2-2.300-2.500-1.700z" /></svg>
        </button>
      </nav>
    `;
  }
}
